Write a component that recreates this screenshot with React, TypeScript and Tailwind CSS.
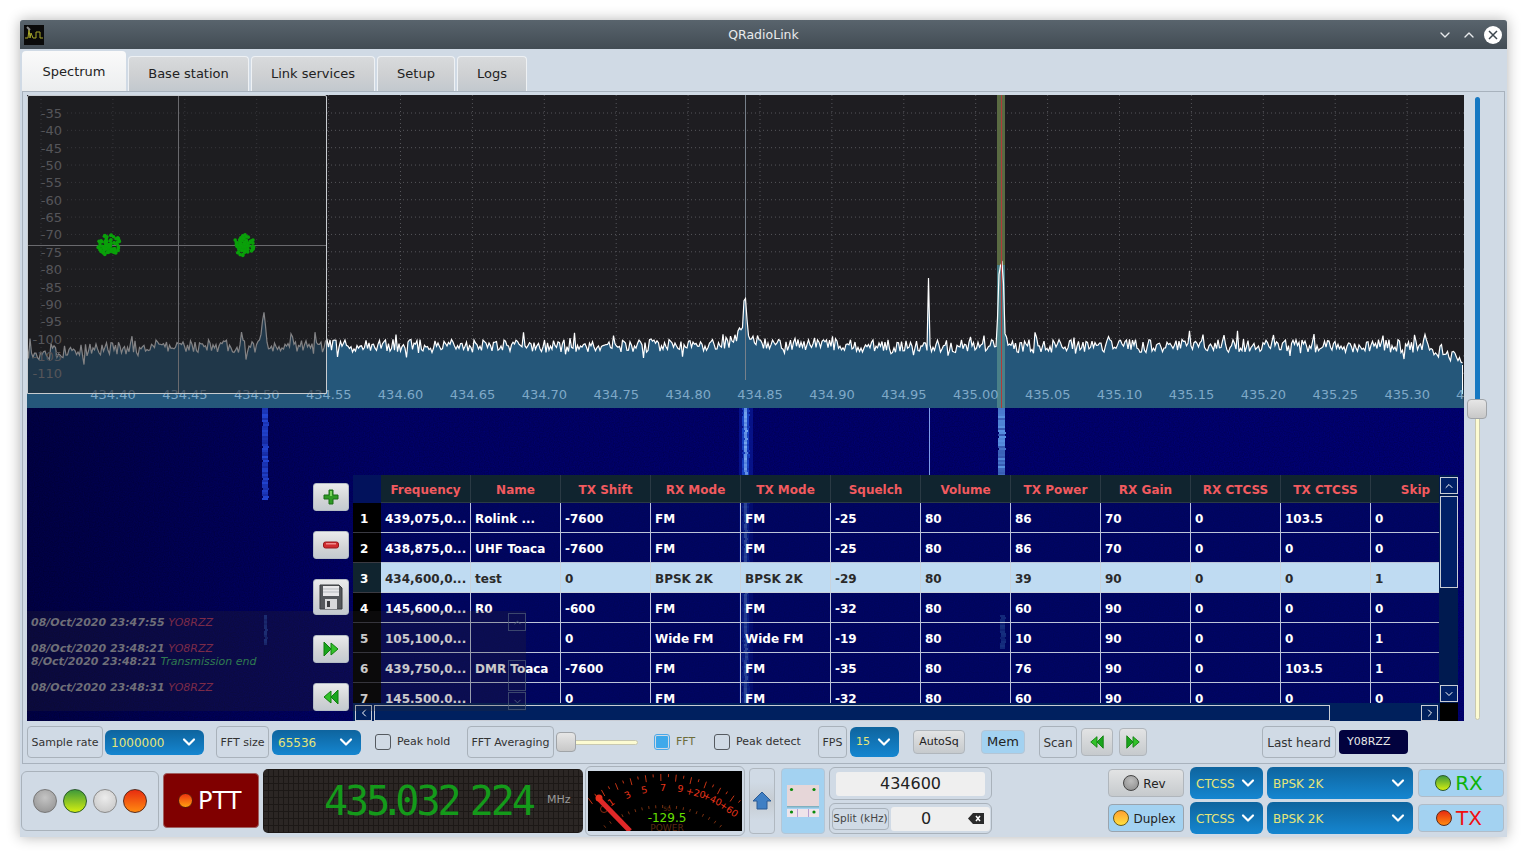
import { ChevronDown, ChevronUp, ChevronLeft, ChevronRight } from "lucide-react";
import { ReactNode } from "react";

// small seeded random so the trace is the same on every load
function rng(seed: number) {
  let s = seed;
  return () => {
    s = (s * 1664525 + 1013904223) % 4294967296;
    return s / 4294967296;
  };
}

const dbLabels = [-35, -40, -45, -50, -55, -60, -65, -70, -75, -80, -85, -90, -95, -100, -105, -110];
const freqLabels = ["434.40", "434.45", "434.50", "434.55", "434.60", "434.65", "434.70", "434.75", "434.80", "434.85", "434.90", "434.95", "435.00", "435.05", "435.10", "435.15", "435.20", "435.25", "435.30"];

function buildTrace() {
  const r = rng(7);
  const pts: [number, number][] = [];
  for (let x = 0; x <= 1436; x += 1.5) {
    let y = 251 + (r() - 0.5) * 13;
    if (r() > 0.88) y -= r() * 10;
    if (r() > 0.92) y += r() * 10;
    if (x < 130) y += ((130 - x) / 130) * 8;
    if (x > 1400) y += ((x - 1400) / 36) * 14;
    // signals
    y -= 34 * Math.exp(-Math.pow((x - 237) / 2.5, 2));
    y -= 30 * Math.exp(-Math.pow((x - 718) / 1.6, 2)) + 22 * Math.exp(-Math.abs(x - 718) / 9);
    if (Math.abs(x - 902) < 1) y = 183;
    y -= 80 * Math.exp(-Math.pow((x - 974) / 3.4, 4));
    pts.push([x, y]);
  }
  return pts;
}

function blob(cx: number, cy: number, seed: number) {
  const r = rng(seed);
  const out: [number, number][] = [];
  for (let i = 0; i < 80; i++) {
    const a = r() * Math.PI * 2;
    const d = Math.pow(r(), 0.8) * 12;
    out.push([cx + Math.cos(a) * d, cy + Math.sin(a) * d * 0.9]);
  }
  return out;
}

// one noisy vertical signal line on the waterfall
function Streak({ x, w, y0, y1, color, seed }: { x: number; w: number; y0: number; y1: number; color: string; seed: number }) {
  const r = rng(seed);
  const rows = [];
  for (let y = y0; y < y1; y += 2) {
    rows.push(<rect key={y} x={x + (r() > 0.8 ? 1 : 0)} y={y} width={w} height={2} fill={color} opacity={0.6 + r() * 0.4} />);
  }
  return <g>{rows}</g>;
}

function PlotBackground() {
  const trace = buildTrace();
  const line = trace.map((p) => p.join(",")).join(" ");
  const area = `0,313 ${line} 1437,313`;
  return (
    <svg className="absolute inset-0" width={1437} height={626} viewBox="0 0 1437 626">
      <defs>
        <filter id="wfnoise" x="0" y="0" width="100%" height="100%">
          <feTurbulence type="fractalNoise" baseFrequency="0.8" numOctaves="1" seed="4" />
          <feColorMatrix values="0 0 0 0 0  0 0 0 0 0  0 0 0 0 0.2  1.6 0 0 0 -0.35" />
        </filter>
        <linearGradient id="wfshade" x1="0" y1="0" x2="1" y2="0">
          <stop offset="0" stopColor="#000" stopOpacity="0.4" />
          <stop offset="0.25" stopColor="#000" stopOpacity="0.1" />
          <stop offset="1" stopColor="#000" stopOpacity="0" />
        </linearGradient>
      </defs>
      <rect width={1437} height={313} fill="#1e1d21" />
      {Array.from({ length: 20 }, (_, i) => (
        <line key={i} x1={14 + i * 71.9} x2={14 + i * 71.9} y1={0} y2={300} stroke="#55555a" strokeDasharray="1 3" />
      ))}
      {dbLabels.map((d, i) => (
        <line key={d} x1={40} x2={1437} y1={18 + i * 17.35} y2={18 + i * 17.35} stroke="#55555a" strokeDasharray="1 3" />
      ))}
      <polygon points={area} fill="#25577a" />
      <rect x={970} y={0} width={8} height={170} fill="#5a6a42" />
      <rect x={970} y={170} width={8} height={143} fill="#4a8088" />
      <line x1={718.5} x2={718.5} y1={0} y2={285} stroke="#77808a" />
      <polyline points={line} fill="none" stroke="#ffffff" strokeWidth={1.2} />
      <line x1={974.5} x2={974.5} y1={0} y2={313} stroke="#b03a3a" />
      <line x1={1435.5} x2={1435.5} y1={270} y2={299} stroke="#ffffff" />
      <g fontFamily="DejaVu Sans" fontSize={13}>
        {dbLabels.map((d, i) => (
          <text key={d} x={35} y={23 + i * 17.35} textAnchor="end" fill="#9a9a9e">
            {d}
          </text>
        ))}
        {freqLabels.map((f, i) => (
          <text key={f} x={86 + i * 71.9} y={304} textAnchor="middle" fill="#7fa9c8">
            {f}
          </text>
        ))}
        <text x={1429} y={304} fill="#7fa9c8">
          4
        </text>
      </g>

      <rect y={313} width={1437} height={313} fill="#00005c" />
      <rect y={313} width={1437} height={313} filter="url(#wfnoise)" />
      <rect y={313} width={1437} height={313} fill="url(#wfshade)" />
      <rect x={712} y={313} width={14} height={313} fill="#0a1ea0" opacity={0.6} />
      <Streak x={235} w={6} y0={313} y1={405} color="#2448d8" seed={21} />
      <Streak x={715} w={7} y0={313} y1={626} color="#1a48c8" seed={22} />
      <Streak x={717} w={3} y0={313} y1={626} color="#7aaaf0" seed={23} />
      <rect x={902} y={313} width={1} height={67} fill="#7d9be8" />
      <Streak x={971} w={7} y0={313} y1={380} color="#5a94e4" seed={24} />
      <Streak x={973} w={5} y0={520} y1={553} color="#3a6fb8" seed={25} />
      <Streak x={237} w={3} y0={520} y1={550} color="#1a3690" seed={26} />
    </svg>
  );
}

function ConstellationOverlay() {
  const dots = [...blob(81, 149, 3), ...blob(217, 149, 11)];
  return (
    <div className="absolute left-0 top-0 h-[299px] w-[300px] rounded-t-[2px] border border-[#c8ccd0] bg-[#1e1d21]/55">
      <svg width={298} height={297} viewBox="0 0 298 297">
        <line x1={150.5} x2={150.5} y1={0} y2={297} stroke="#6a6a6e" />
        <line x1={0} x2={298} y1={149.5} y2={149.5} stroke="#6a6a6e" />
        {dots.map((d, i) => (
          <circle key={i} cx={d[0]} cy={d[1]} r={1.8} fill="#0aa00a" />
        ))}
      </svg>
    </div>
  );
}

function SideButton({ tall, children }: { tall?: boolean; children: ReactNode }) {
  return (
    <div className={`flex w-[36px] items-center justify-center rounded-[3px] border border-[#b4bcc4] bg-[linear-gradient(#e9eaeb,#d2d4d6_60%,#c4cad0)] ${tall ? "h-[36px]" : "h-[28px]"}`}>
      {children}
    </div>
  );
}

function PlusIcon() {
  return (
    <svg width={18} height={18} viewBox="0 0 18 18">
      <path d="M7 2h4v5h5v4h-5v5H7v-5H2V7h5z" fill="#2f9a24" stroke="#1b6d16" strokeLinejoin="round" />
      <path d="M8 3h2v5H8z" fill="#7bd45e" />
    </svg>
  );
}

function MinusIcon() {
  return (
    <svg width={18} height={10} viewBox="0 0 18 10">
      <rect x={1.5} y={2} width={15} height={6} rx={2} fill="#d02c30" stroke="#97181c" />
      <rect x={4} y={3} width={10} height={1.5} fill="#f08a8a" />
    </svg>
  );
}

function FloppyIcon() {
  return (
    <svg width={24} height={26} viewBox="0 0 24 26">
      <path d="M1 1h19l3 3v21H1z" fill="#55585c" stroke="#3b3d40" />
      <rect x={4} y={2} width={16} height={10} fill="#e8e8ea" />
      <path d="M4 5h16M4 8h16" stroke="#b7bbc0" />
      <rect x={6} y={15} width={12} height={10} fill="#d7d8da" />
      <rect x={8} y={17} width={3} height={6} fill="#3b3d40" />
    </svg>
  );
}

function ForwardIcon({ size = 18 }: { size?: number }) {
  return (
    <svg width={size} height={size} viewBox="0 0 18 18">
      <path d="M2 2l7 7-7 7z" fill="#19a51d" stroke="#11800f" />
      <path d="M9 3l7 6-7 6z" fill="#33c22a" stroke="#11800f" />
    </svg>
  );
}

function RewindIcon({ size = 18 }: { size?: number }) {
  return (
    <svg width={size} height={size} viewBox="0 0 18 18">
      <path d="M16 2L9 9l7 7z" fill="#19a51d" stroke="#11800f" />
      <path d="M9 3L2 9l7 6z" fill="#33c22a" stroke="#11800f" />
    </svg>
  );
}

const columns = ["Frequency", "Name", "TX Shift", "RX Mode", "TX Mode", "Squelch", "Volume", "TX Power", "RX Gain", "RX CTCSS", "TX CTCSS", "Skip"];

const memories = [
  ["439,075,0...", "Rolink ...", "-7600", "FM", "FM", "-25", "80", "86", "70", "0", "103.5", "0"],
  ["438,875,0...", "UHF Toaca", "-7600", "FM", "FM", "-25", "80", "86", "70", "0", "0", "0"],
  ["434,600,0...", "test", "0", "BPSK 2K", "BPSK 2K", "-29", "80", "39", "90", "0", "0", "1"],
  ["145,600,0...", "R0", "-600", "FM", "FM", "-32", "80", "60", "90", "0", "0", "0"],
  ["105,100,0...", "", "0", "Wide FM", "Wide FM", "-19", "80", "10", "90", "0", "0", "1"],
  ["439,750,0...", "DMR Toaca", "-7600", "FM", "FM", "-35", "80", "76", "90", "0", "103.5", "1"],
  ["145,500,0...", "", "0", "FM", "FM", "-32", "80", "60", "90", "0", "0", "0"],
];

function MemoryTable() {
  return (
    <div className="absolute left-[326px] top-[380px] flex h-[246px] w-[1105px] flex-col">
      <div className="flex h-[228px]">
        <div className="h-[228px] w-[1086px] overflow-hidden">
          <div className="flex h-[28px] w-[1200px] bg-[#10242f]">
            <div className="h-full w-[28px] bg-[#02125c]" />
            {columns.map((c) => (
              <div key={c} className="flex h-full w-[90px] items-center justify-center border-r border-b border-[#2a3a44] pt-[2px] text-[12px] font-bold text-[#f25a5f]">
                {c}
              </div>
            ))}
          </div>
          {memories.map((row, i) => (
            <div key={i} className="flex h-[30px] w-[1200px]">
              <div className={`flex h-full w-[28px] items-center border-b border-[#3a3a42] pt-[2px] pl-[7px] text-[12px] font-bold text-white ${i === 2 ? "bg-[#10242f]" : "bg-black"}`}>
                {i + 1}
              </div>
              {row.map((cell, j) => (
                <div
                  key={j}
                  className={`flex h-full w-[90px] items-center overflow-hidden border-r border-b pt-[2px] pl-[4px] text-[12px] font-bold whitespace-nowrap ${i === 2 ? "border-[#c9d3dc] bg-[#bfdbf2] text-[#2a2a2a]" : "border-[#bcc4d8] bg-[#00085c]/60 text-white"}`}
                >
                  {cell}
                </div>
              ))}
            </div>
          ))}
        </div>
        <div className="flex h-[228px] w-[19px] flex-col bg-[#001a50] pl-[1px]">
          <div className="mt-[2px] flex h-[17px] w-[18px] items-center justify-center border border-[#c8ccd4] bg-[#001f66] text-white">
            <ChevronUp size={12} />
          </div>
          <div className="mt-[2px] h-[92px] w-[18px] border border-[#c8ccd4] bg-[#001f66]" />
          <div className="mt-auto mb-[1px] flex h-[17px] w-[18px] items-center justify-center border border-[#c8ccd4] bg-[#001f66] text-white">
            <ChevronDown size={12} />
          </div>
        </div>
      </div>
      <div className="flex h-[18px] items-end bg-[#00205c]">
        <div className="ml-[2px] flex h-[16px] w-[17px] items-center justify-center border border-[#c8ccd4] text-white">
          <ChevronLeft size={12} />
        </div>
        <div className="ml-[2px] h-[16px] w-[956px] border border-[#c8ccd4] bg-[#00205f]" />
        <div className="ml-[91px] flex h-[16px] w-[17px] items-center justify-center border border-[#c8ccd4] text-white">
          <ChevronRight size={12} />
        </div>
        <div className="ml-[2px] h-[18px] w-[18px] bg-black" />
      </div>
    </div>
  );
}

function LogLine({ time, text, green }: { time: string; text: string; green?: boolean }) {
  return (
    <div className="h-[13px] whitespace-nowrap text-[11px] leading-[13px] italic">
      <span className="font-bold text-[#6f6f78]">{time}</span>{" "}
      <span className={green ? "text-[#2f7a50]" : "text-[#7b2a48]"}>{text}</span>
    </div>
  );
}

function LogOverlay() {
  return (
    <div className="absolute left-0 top-[516px] h-[100px] w-[499px] bg-[#2d282d]/25 pt-[5px] pl-[4px]">
      <LogLine time="08/Oct/2020 23:47:55" text="YO8RZZ" />
      <div className="h-[13px]" />
      <LogLine time="08/Oct/2020 23:48:21" text="YO8RZZ" />
      <LogLine time="8/Oct/2020 23:48:21" text="Transmission end" green />
      <div className="h-[13px]" />
      <LogLine time="08/Oct/2020 23:48:31" text="YO8RZZ" />
      <div className="absolute right-0 top-[2px] flex h-[97px] w-[18px] flex-col">
        <div className="flex h-[18px] items-center justify-center border border-[#50607a]/70 text-[#50607a]">
          <ChevronUp size={11} />
        </div>
        <div className="mt-[29px] h-[31px] border border-[#50607a]/70" />
        <div className="mt-auto flex h-[18px] items-center justify-center border border-[#50607a]/70 text-[#50607a]">
          <ChevronDown size={11} />
        </div>
      </div>
    </div>
  );
}

function Label({ w, className = "", children }: { w: string; className?: string; children: ReactNode }) {
  return (
    <div className={`flex h-[32px] items-center justify-center rounded-[4px] border border-[#a9b2bb] pt-[2px] text-[11px] text-[#333] ${w} ${className}`}>
      {children}
    </div>
  );
}

function Combo({ className, children }: { className: string; children: ReactNode }) {
  return (
    <div className={`flex items-center justify-between rounded-[6px] bg-[linear-gradient(#0e649e,#1586d0)] pr-[5px] pl-[6px] text-[#e6e67a] ${className}`}>
      <span className="pt-[1px]">{children}</span>
      <ChevronDown size={20} strokeWidth={2.6} className="text-white" />
    </div>
  );
}

function Check({ className = "" }: { className?: string }) {
  return <div className={`h-[16px] w-[16px] shrink-0 rounded-[3px] border border-[#555a60] ${className}`} />;
}

function Led({ className }: { className: string }) {
  return <div className={`shrink-0 rounded-full border ${className}`} />;
}

function ControlsRow() {
  return (
    <div className="mt-[5px] flex h-[32px] items-center text-[#333]">
      <Label w="w-[76px]">Sample rate</Label>
      <Combo className="ml-[2px] h-[25px] w-[99px] text-[12px]">1000000</Combo>
      <Label w="w-[53px]" className="ml-[12px]">FFT size</Label>
      <Combo className="ml-[3px] h-[25px] w-[89px] text-[12px]">65536</Combo>
      <Check className="ml-[14px]" />
      <span className="ml-[6px] w-[53px] pt-[1px] text-[11px] whitespace-nowrap">Peak hold</span>
      <Label w="w-[87px]" className="ml-[17px]">FFT Averaging</Label>
      <div className="relative ml-[2px] flex h-[20px] w-[82px] items-center">
        <div className="h-[5px] w-full rounded-full border border-[#c8c8b0] bg-[#fcfbd2]" />
        <div className="absolute left-0 h-[20px] w-[20px] rounded-[4px] border border-[#a0a4a8] bg-[linear-gradient(#e6e6e6,#c8c8c8)]" />
      </div>
      <div className="ml-[16px] flex h-[16px] w-[16px] items-center justify-center rounded-[3px] border border-[#4aa8e8]">
        <div className="h-[12px] w-[12px] rounded-[1px] bg-[#3fa9ea]" />
      </div>
      <span className="ml-[6px] w-[18px] pt-[1px] text-[11px] text-[#6d6d3a]">FFT</span>
      <Check className="ml-[20px]" />
      <span className="ml-[6px] w-[64px] pt-[1px] text-[11px] whitespace-nowrap">Peak detect</span>
      <Label w="w-[29px]" className="ml-[18px]">FPS</Label>
      <Combo className="ml-[3px] h-[30px] w-[49px] text-[11px]">15</Combo>
      <div className="ml-[14px] flex h-[24px] w-[52px] items-center justify-center rounded-[4px] border border-[#b0b6bc] bg-[linear-gradient(#e2e3e4,#c6cacd)] text-[11px] text-[#222]">AutoSq</div>
      <div className="ml-[16px] flex h-[24px] w-[44px] items-center justify-center rounded-[4px] border border-[#b4c6d6] bg-[#a3d2f1] text-[13px] text-[#222]">Mem</div>
      <Label w="w-[38px]" className="ml-[14px] text-[12px]">Scan</Label>
      <div className="ml-[4px] flex h-[28px] w-[32px] items-center justify-center rounded-[4px] border border-[#b0b6bc] bg-[linear-gradient(#e2e3e4,#c6cacd)]">
        <RewindIcon size={16} />
      </div>
      <div className="ml-[6px] flex h-[28px] w-[28px] items-center justify-center rounded-[4px] border border-[#b0b6bc] bg-[linear-gradient(#e2e3e4,#c6cacd)]">
        <ForwardIcon size={16} />
      </div>
      <Label w="w-[74px]" className="ml-[115px] text-[12px]">Last heard</Label>
      <div className="ml-[3px] flex h-[24px] w-[69px] items-center rounded-[4px] bg-[#02023e] pl-[8px] text-[11px] text-[#e8e8e8]">Y08RZZ</div>
    </div>
  );
}

function Meter() {
  const ticks = Array.from({ length: 22 }, (_, i) => -36 + i * 3.5);
  const inner = Array.from({ length: 19 }, (_, i) => -38 + i * 4.2);
  const labels: [string, number, number, number][] = [
    ["1", 25, 34, -35],
    ["3", 41, 27, -25],
    ["5", 57, 22, -12],
    ["7", 75, 20, 0],
    ["9", 92, 21, 8],
    ["+20", 107, 25, 15],
    ["+40", 123, 31, 25],
    ["+60", 139, 41, 35],
  ];
  return (
    <svg width={154} height={60} viewBox="0 0 154 60" className="block bg-black">
      {ticks.map((a, i) => {
        const rad = (a * Math.PI) / 180;
        const r0 = i % 2 ? 124 : 120;
        return (
          <line key={i} x1={75 + Math.sin(rad) * r0} y1={130 - Math.cos(rad) * r0} x2={75 + Math.sin(rad) * 127} y2={130 - Math.cos(rad) * 127} stroke="#c43414" strokeWidth={1} />
        );
      })}
      {inner.map((a, i) => {
        const rad = (a * Math.PI) / 180;
        return (
          <line key={i} x1={75 + Math.sin(rad) * 93} y1={130 - Math.cos(rad) * 93} x2={75 + Math.sin(rad) * 96} y2={130 - Math.cos(rad) * 96} stroke="#7a3010" strokeWidth={1} />
        );
      })}
      <g fontFamily="DejaVu Sans" fontSize={9.5} fill="#e8341a" textAnchor="middle">
        {labels.map(([t, x, y, rot]) => (
          <text key={t} x={x} y={y} transform={`rotate(${rot} ${x} ${y})`}>
            {t}
          </text>
        ))}
      </g>
      <text x={79} y={40} fontFamily="DejaVu Sans" fontSize={6} fill="#6a3010" textAnchor="middle">50</text>
      <text x={79} y={60} fontFamily="DejaVu Sans" fontSize={9} fill="#5a2a10" textAnchor="middle">POWER</text>
      <circle cx={16} cy={38} r={3.5} fill="none" stroke="#8a2a10" />
      <line x1={10} y1={27} x2={42} y2={60} stroke="#e02828" strokeWidth={5} />
      <circle cx={11} cy={27} r={3.5} fill="#e8301c" />
      <text x={79} y={51} fontFamily="DejaVu Sans" fontSize={12} fill="#66e000" textAnchor="middle">-129.5</text>
    </svg>
  );
}

function BottomRow() {
  return (
    <div className="flex h-[73px] items-center">
      <div className="ml-[1px] flex h-[60px] w-[138px] items-center justify-center gap-[6px] rounded-[6px] border border-[#a9b2bb]">
        <Led className="h-[24px] w-[24px] border-[#777] bg-[radial-gradient(circle_at_50%_35%,#c4c4c4,#8e8e8e)]" />
        <Led className="h-[24px] w-[24px] border-[#2b5a2b] bg-[linear-gradient(#3f9a3a,#d4ee10)]" />
        <Led className="h-[24px] w-[24px] border-[#8a8a8a] bg-[radial-gradient(circle_at_50%_35%,#ececec,#c2c2c2)]" />
        <Led className="h-[24px] w-[24px] border-[#5a2a1a] bg-[linear-gradient(#e82c10,#ff8a10)]" />
      </div>
      <div className="ml-[4px] flex h-[55px] w-[96px] items-center rounded-[4px] border border-[#a06060] bg-[#800000] pl-[14px] text-[24px] text-white">
        <Led className="h-[15px] w-[15px] border-[#5a1a0a] bg-[linear-gradient(#ee3410,#ffa010)]" />
        <span className="ml-[5px]">PTT</span>
      </div>
      <div className="ml-[4px] flex h-[64px] w-[320px] items-center rounded-[5px] bg-[#2b2624] bg-[linear-gradient(#1c1816_1px,transparent_1px),linear-gradient(90deg,#1c1816_1px,transparent_1px)] bg-[length:5px_7px] pl-[61px]">
        <span className="font-['DejaVu_Sans_Mono',monospace] text-[40px] leading-none tracking-[-3px] whitespace-pre text-[#149a1a]">
          435<span className="-ml-[7px] tracking-[-9px]">.</span>032<span className="tracking-[-13px]"> </span>224
        </span>
        <span className="ml-[14px] text-[11px] text-[#9a9a9a]">MHz</span>
      </div>
      <div className="ml-[2px] flex h-[70px] w-[160px] items-center justify-center rounded-[6px] border border-[#a9b2bb]">
        <Meter />
      </div>
      <div className="ml-[4px] flex h-[66px] w-[26px] items-center justify-center rounded-[4px] border border-[#b0b8c0] bg-[linear-gradient(#d0dae5_20%,#c6ccd2_50%,#d0dae5_80%)]">
        <svg width={20} height={20} viewBox="0 0 20 20">
          <path d="M10 1l9 9h-4v8H5v-8H1z" fill="#3f7fc4" stroke="#2a5a94" />
        </svg>
      </div>
      <div className="ml-[6px] flex h-[66px] w-[44px] items-center justify-center rounded-[4px] border border-[#b4c6d6] bg-[#a3d2f1]">
        <svg width={32} height={32} viewBox="0 0 32 32">
          <rect width={32} height={21} fill="#e6d6d8" />
          <rect y={21} width={32} height={1.5} fill="#7fb0c0" />
          <rect y={24} width={32} height={8} fill="#eee4ea" />
          <path d="M10.5 24v8M21.5 24v8" stroke="#b8a0d0" />
          <circle cx={4.5} cy={4.5} r={1.6} fill="#0a8a0a" />
          <circle cx={27} cy={4.5} r={1.6} fill="#0a8a0a" />
          <circle cx={4.5} cy={27} r={1.6} fill="#0a8a0a" />
          <circle cx={27} cy={27} r={1.6} fill="#0a8a0a" />
        </svg>
      </div>
      <div className="ml-[4px] flex w-[163px] flex-col gap-[3px]">
        <div className="flex h-[33px] items-center justify-center rounded-[6px] border border-[#a9b2bb] px-[6px]">
          <div className="flex h-[24px] w-full items-center justify-center rounded-[3px] bg-[#efefef] text-[16px] text-[#222]">434600</div>
        </div>
        <div className="flex h-[31px] items-center rounded-[6px] border border-[#a9b2bb] pl-[2px]">
          <div className="flex h-[22px] w-[57px] items-center justify-center rounded-[4px] border border-[#a9b2bb] text-[10.5px] text-[#444]">Split (kHz)</div>
          <div className="ml-[2px] flex h-[24px] w-[99px] items-center rounded-[3px] bg-[#efefef] pr-[6px]">
            <span className="flex-1 pl-[30px] text-left text-[16px] text-[#222]">0</span>
            <svg width={16} height={11} viewBox="0 0 16 11">
              <path d="M5 0h11v11H5L0 5.5z" fill="#2a2a2a" />
              <path d="M8 3l4 5M12 3l-4 5" stroke="#fff" strokeWidth={1.5} />
            </svg>
          </div>
        </div>
      </div>
      <div className="ml-[116px] flex w-[76px] flex-col gap-[7px]">
        <div className="flex h-[28px] items-center justify-center gap-[4px] rounded-[4px] border border-[#b0b6bc] bg-[linear-gradient(#e2e3e4,#c6cacd)] pr-[3px] text-[12px] text-[#222]">
          <Led className="h-[16px] w-[16px] border-[#444] bg-[radial-gradient(circle_at_50%_35%,#bdbdbd,#8a8a8a)]" />
          <span className="pt-[1px]">Rev</span>
        </div>
        <div className="flex h-[28px] items-center justify-center gap-[4px] rounded-[4px] border border-[#9aa4ae] bg-[#a3d2f1] pr-[3px] text-[12px] text-[#222]">
          <Led className="h-[16px] w-[16px] border-[#6a5a1a] bg-[linear-gradient(#ffa030,#ffe040)]" />
          <span className="pt-[1px]">Duplex</span>
        </div>
      </div>
      <div className="ml-[6px] flex w-[73px] flex-col gap-[3px]">
        <Combo className="h-[32px] text-[12px]">CTCSS</Combo>
        <Combo className="h-[32px] text-[12px]">CTCSS</Combo>
      </div>
      <div className="ml-[4px] flex w-[146px] flex-col gap-[3px]">
        <Combo className="h-[32px] text-[12px]">BPSK 2K</Combo>
        <Combo className="h-[32px] text-[12px]">BPSK 2K</Combo>
      </div>
      <div className="ml-[5px] flex w-[86px] flex-col gap-[7px]">
        <div className="flex h-[28px] items-center justify-center gap-[4px] rounded-[4px] border border-[#b0bcc8] bg-[#a3d2f1] pr-[4px] text-[20px] text-[#0cb30c]">
          <Led className="h-[16px] w-[16px] border-[#2b5a2b] bg-[linear-gradient(#3f9a3a,#d4ee10)]" />
          RX
        </div>
        <div className="flex h-[28px] items-center justify-center gap-[4px] rounded-[4px] border border-[#b0bcc8] bg-[#a3d2f1] pr-[4px] text-[20px] text-[#f01010]">
          <Led className="h-[16px] w-[16px] border-[#5a2a1a] bg-[linear-gradient(#e82c10,#ff8a10)]" />
          TX
        </div>
      </div>
    </div>
  );
}

const tabs = [
  { name: "Base station", w: "w-[121px]" },
  { name: "Link services", w: "w-[124px]" },
  { name: "Setup", w: "w-[78px]" },
  { name: "Logs", w: "w-[70px]" },
];

export default function App() {
  return (
    <div className="h-[857px] w-[1527px] overflow-hidden bg-white pt-[20px] pl-[20px] font-['DejaVu_Sans',sans-serif]">
      <div className="flex h-[817px] w-[1487px] flex-col rounded-t-[3px] bg-[#d0dae5] shadow-[0_0_14px_rgba(0,0,0,0.3)]">
        <div className="flex h-[29px] shrink-0 items-center rounded-t-[3px] bg-[linear-gradient(#59646d,#424c54)] pr-[5px] pl-[4px]">
          <svg width={20} height={20} viewBox="0 0 20 20" className="shrink-0">
            <rect width={20} height={20} fill="#0a0a0a" />
            <path d="M1 13h3l1-9 1 9 1-5 2 5h3V7h4v6h3" fill="none" stroke="#a8a82a" />
            <path d="M3 2l3 3" stroke="#8a8a8a" strokeWidth={2} />
          </svg>
          <span className="flex-1 pt-[1px] pl-[46px] text-center text-[12.5px] text-[#e8eaec]">QRadioLink</span>
          <ChevronDown size={16} className="mr-[8px] text-[#e8eaec]" />
          <ChevronUp size={16} className="mr-[7px] text-[#e8eaec]" />
          <div className="flex h-[18px] w-[18px] items-center justify-center rounded-full bg-white">
            <svg width={10} height={10} viewBox="0 0 10 10">
              <path d="M1 1l8 8M9 1l-8 8" stroke="#3c464e" strokeWidth={1.5} />
            </svg>
          </div>
        </div>
        <div className="flex h-[42px] shrink-0 items-end gap-[2px] pl-[2px]">
          <div className="flex h-[40px] w-[104px] items-center justify-center rounded-t-[4px] bg-[linear-gradient(#fafafa,#eceeef)] pt-[1px] text-[13px] text-[#222]">Spectrum</div>
          {tabs.map((t) => (
            <div key={t.name} className={`flex h-[35px] items-center justify-center rounded-t-[4px] border-x border-t border-[#eef1f4] bg-[linear-gradient(#d8dadc,#cfd1d3_50%,#c2c8ce)] text-[13px] text-[#222] ${t.w}`}>
              {t.name}
            </div>
          ))}
        </div>
        <div className="mx-[2px] h-[673px] shrink-0 border border-[#a8b2bd] pt-[3px] pl-[4px]">
          <div className="flex">
            <div className="relative h-[626px] w-[1437px] overflow-hidden">
              <PlotBackground />
              <ConstellationOverlay />
              <MemoryTable />
              <LogOverlay />
              <div className="absolute left-[286px] top-[388px] flex flex-col gap-[20px]">
                <SideButton><PlusIcon /></SideButton>
                <SideButton><MinusIcon /></SideButton>
                <SideButton tall><FloppyIcon /></SideButton>
                <SideButton><ForwardIcon /></SideButton>
                <SideButton><RewindIcon /></SideButton>
              </div>
            </div>
            <div className="relative ml-[3px] h-[626px] w-[20px]">
              <div className="absolute left-[8px] top-[2px] h-[302px] w-[5px] rounded-t-full bg-[#1678c2]" />
              <div className="absolute left-[8px] top-[304px] h-[321px] w-[5px] rounded-b-full border border-[#c8c8b0] bg-[#fcfbd2]" />
              <div className="absolute left-0 top-[304px] h-[20px] w-[20px] rounded-[4px] border border-[#a0a4a8] bg-[linear-gradient(#e6e6e6,#c8c8c8)]" />
            </div>
          </div>
          <ControlsRow />
        </div>
        <BottomRow />
      </div>
    </div>
  );
}
